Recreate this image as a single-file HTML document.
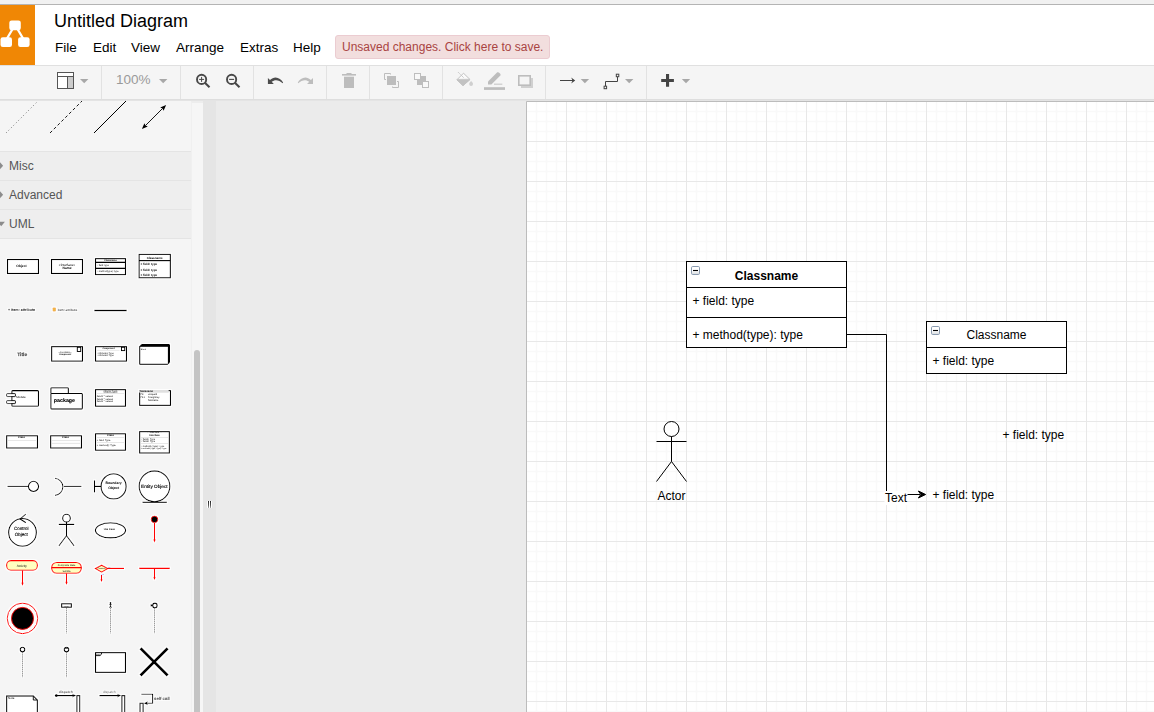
<!DOCTYPE html>
<html><head><meta charset="utf-8"><title>Untitled Diagram</title>
<style>
html,body{margin:0;padding:0;}
body{width:1154px;height:712px;overflow:hidden;position:relative;background:#ebebeb;font-family:"Liberation Sans",Arial,sans-serif;color:#000;}
.abs{position:absolute;}
#topband{left:0;top:0;width:1154px;height:4px;background:#f1f1f1;}
#topline{left:0;top:4px;width:1154px;height:1px;background:#b4b4b4;}
#header{left:0;top:5px;width:1154px;height:60px;background:#fff;}
#logo{left:0;top:5px;width:35px;height:60px;background:#f08705;}
#title{left:54px;top:11px;font-size:18px;line-height:21px;white-space:nowrap;}
.menu{top:39.5px;font-size:13.5px;line-height:16px;white-space:nowrap;}
#save{left:335px;top:35px;width:213px;height:22px;border:1px solid #ebccd1;background:#f2dede;border-radius:3px;color:#a94442;font-size:12px;line-height:22px;white-space:nowrap;}
#save span{position:absolute;left:6px;top:0;}
#hline{left:0;top:65px;width:1154px;height:1px;background:#e0e0e0;}
#toolbar{left:0;top:66px;width:1154px;height:33px;background:#f5f5f5;}
#tline{left:0;top:99px;width:1154px;height:1px;background:#dedede;}
#tline2{left:0;top:100px;width:1154px;height:1px;background:#e4e4e4;z-index:5;}
.sep{top:66px;width:1px;height:33px;background:#e2e2e2;}
#sidebar{left:0;top:100px;width:191px;height:612px;background:#f5f5f5;overflow:hidden;}
#sbtrack{left:191px;top:101px;width:12px;height:611px;background:#f6f6f6;border-left:1px solid #f0f0f0;box-sizing:border-box;border-top:2px solid #ededed;}
#sbthumb{left:194px;top:350px;width:6px;height:380px;background:#c4c4c4;border-radius:3px;}
#split{left:203px;top:100px;width:13px;height:612px;background:#e5e5e5;}
#handle{left:207px;top:501px;width:5px;height:7px;background:#fff;}
#handle i{position:absolute;top:0;width:1px;height:7px;background:linear-gradient(#222,#555 60%,#aaa);}
.sect{left:0;width:191px;height:28px;background:#eeeeee;border-top:1px solid #e4e4e4;font-size:12px;color:#555;}
.sect span{position:absolute;left:9px;top:7px;line-height:14px;}
#page{left:526px;top:101px;width:628px;height:611px;background:#fff;overflow:hidden;}
</style></head><body>
<div class="abs" id="topband"></div>
<div class="abs" id="topline"></div>
<div class="abs" id="header"></div>
<div class="abs" id="logo"></div>
<div class="abs" id="title">Untitled Diagram</div>
<div class="abs menu" style="left:55px">File</div>
<div class="abs menu" style="left:93px">Edit</div>
<div class="abs menu" style="left:131px">View</div>
<div class="abs menu" style="left:176px">Arrange</div>
<div class="abs menu" style="left:240px">Extras</div>
<div class="abs menu" style="left:293px">Help</div>
<div class="abs" id="save"><span>Unsaved changes. Click here to save.</span></div>
<div class="abs" id="hline"></div>
<div class="abs" id="toolbar"></div>
<div class="abs" id="tline"></div>
<div class="abs" id="tline2"></div>
<!--TOOLBAR-->
<div class="abs sep" style="left:101px"></div>
<div class="abs sep" style="left:180px"></div>
<div class="abs sep" style="left:253px"></div>
<div class="abs sep" style="left:326px"></div>
<div class="abs sep" style="left:369px"></div>
<div class="abs sep" style="left:442px"></div>
<div class="abs sep" style="left:545px"></div>
<div class="abs sep" style="left:646px"></div>
<div class="abs" style="left:116px;top:72px;font-size:13.5px;line-height:16px;color:#9a9a9a;">100%</div>
<svg class="abs" style="left:0;top:0" width="1154" height="100" viewBox="0 0 1154 100">
<!-- logo -->
<g fill="#fff" stroke="none">
<rect x="9.300" y="20.500" width="11.500" height="9.700" rx="2.300"/>
<rect x="0.500" y="37.300" width="11.500" height="9.700" rx="2.300"/>
<rect x="18.100" y="37.300" width="11.500" height="9.700" rx="2.300"/>
</g>
<path d="M12.600 29 L7 38.500 M17.500 29 L23.100 38.500" stroke="#fff" stroke-width="2.300" fill="none"/>
<!-- format icon -->
<g fill="none" stroke="#555" stroke-width="1">
<rect x="57.5" y="72.5" width="16" height="16" fill="#fff"/>
<path d="M57.5 76.5 H73.5 M67.5 76.5 V88.5"/>
<rect x="68" y="77" width="5" height="11" fill="#ccc" stroke="none"/>
</g>
<!-- dropdown triangles -->
<g fill="#a8a8a8">
<path d="M80 79 h8.4 l-4.2 4.2z"/>
<path d="M159 79 h8.4 l-4.2 4.2z"/>
<path d="M580.7 79 h8.4 l-4.2 4.2z"/>
<path d="M625 79 h8.4 l-4.2 4.2z"/>
<path d="M681.8 79 h8.4 l-4.2 4.2z"/>
</g>
<!-- zoom in -->
<g fill="none" stroke="#484848" stroke-width="1.900">
<circle cx="201.600" cy="79.400" r="4.600"/>
<path d="M204.900 82.800 L209.500 87.200" stroke-width="2.100"/>
<path d="M199.100 79.400 h5 M201.600 76.900 v5" stroke-width="1"/>
<circle cx="231.600" cy="79.400" r="4.600"/>
<path d="M234.900 82.800 L239.500 87.200" stroke-width="2.100"/>
<path d="M229.100 79.400 h5" stroke-width="1.100"/>
</g>
<!-- undo / redo -->
<path d="M267.9 78 L267.9 83.9 L273.8 83.9 L271.7 81.8 C274.6 79.3 279 79.6 282.6 83.2 L283.1 82.6 C280.6 77.6 274.4 75.2 270 80.1 Z" fill="#4c4c4c"/>
<path d="M313 78 L313 83.9 L307.1 83.9 L309.2 81.8 C306.3 79.3 301.9 79.6 298.3 83.2 L297.8 82.6 C300.3 77.6 306.5 75.2 310.9 80.1 Z" fill="#bdbdbd"/>
<!-- trash -->
<g fill="#bdbdbd">
<rect x="342" y="74" width="14" height="1.6"/>
<rect x="346.500" y="73" width="5" height="1.5"/>
<rect x="344" y="76.700" width="10" height="11.3"/>
</g>
<!-- to front -->
<g fill="#bdbdbd" stroke="none">
<rect x="387" y="76" width="9" height="9"/>
<rect x="417" y="76" width="9" height="9"/>
</g>
<g fill="none" stroke="#bdbdbd" stroke-width="1">
<path d="M390.500 74.500 V73.500 H384.500 V79.500 H386"/>
<path d="M392.500 86.500 V87.500 H398.500 V81.500 H397"/>
<rect x="414.500" y="73.500" width="6" height="6" fill="#f8f8f8"/>
<rect x="422.500" y="81.500" width="6" height="6" fill="#f8f8f8"/>
</g>
<!-- fill bucket -->
<path d="M463.500 73.200 L470 79.500 L463 85.700 L456.900 79.800 Z" fill="#fbfbfb" stroke="#c2c2c2" stroke-width="1" stroke-linejoin="round"/>
<path d="M457.400 79.300 L469.700 79.200 L470 79.500 L463 85.700 L456.900 79.800 Z" fill="#c2c2c2" stroke="#c2c2c2" stroke-width="0.600"/>
<path d="M458.100 72.200 L463.800 77.800" stroke="#bdbdbd" stroke-width="0.900" fill="none" stroke-dasharray="1.300 0.500"/>
<circle cx="471.100" cy="84" r="1.900" fill="#cfcfcf"/>
<path d="M471.100 80.800 l1.600 2.600 h-3.200z" fill="#cfcfcf"/>
<!-- pen -->
<g fill="#bdbdbd">
<path d="M488 84.600 L488 81.400 L497 72.600 C498.200 71.600 500.800 73.400 500.600 75.200 L491.400 84.600 Z"/>
<rect x="494" y="83.700" width="8.300" height="0.900"/>
<rect x="484" y="87.200" width="21" height="2.700"/>
</g>
<!-- shadow -->
<rect x="521" y="78" width="12" height="10" fill="#d0d0d0"/>
<rect x="518.800" y="75.800" width="11.400" height="9.400" fill="#f5f5f5" stroke="#bdbdbd" stroke-width="1.600"/>
<!-- arrow -->
<path d="M560 80.500 H573" stroke="#444" stroke-width="1" fill="none"/>
<path d="M575.200 80.500 L571.200 77.600 L572.500 80.500 L571.200 83.400 Z" fill="#444"/>
<!-- waypoints -->
<g fill="none" stroke="#444" stroke-width="1">
<path d="M617.500 77 V81.500 H605.500 V86"/>
<rect x="616.300" y="74.200" width="2.500" height="2.500" fill="#f5f5f5"/>
<rect x="604.100" y="86.200" width="2.500" height="2.500" fill="#f5f5f5"/>
</g>
<!-- plus -->
<path d="M661.200 78.900 h4.800 v-4.800 h3.100 v4.800 h4.800 v3.100 h-4.800 v4.800 h-3.100 v-4.800 h-4.800z" fill="#444"/>
</svg>
<!--/TOOLBAR-->
<div class="abs" id="sidebar">
<!--SIDEBAR-->
<div class="abs" style="left:0;top:-100px;width:191px;height:712px">
<div class="abs sect" style="top:151px"><span>Misc</span></div>
<div class="abs sect" style="top:180px"><span>Advanced</span></div>
<div class="abs sect" style="top:209px;height:28px;border-bottom:1px solid #e4e4e4"><span>UML</span></div>
<svg class="abs" style="left:0;top:0" width="191" height="712" viewBox="0 0 191 712" text-rendering="geometricPrecision" font-family="Liberation Sans, Arial, sans-serif">
<defs>
<filter id="halo" x="-5%" y="-5%" width="110%" height="110%"><feMorphology in="SourceAlpha" operator="dilate" radius="0.9" result="d"/><feFlood flood-color="#ffffff" flood-opacity="0.85"/><feComposite in2="d" operator="in" result="h"/><feMerge><feMergeNode in="h"/><feMergeNode in="SourceGraphic"/></feMerge></filter>
</defs>
<!-- section arrows -->
<path d="M0 162.300 L3.100 165.800 L0 169.300Z" fill="#8c8c8c"/>
<path d="M0 191.300 L3.100 194.800 L0 198.300Z" fill="#8c8c8c"/>
<path d="M0 221.800 L4.900 221.800 L1.200 226.200 L0 224.800Z" fill="#8c8c8c"/>
<!-- row 0 lines -->
<g stroke="#000" fill="none" stroke-width="1">
<path d="M6 133 L38.500 100.500" stroke="#555" stroke-width="0.800" stroke-dasharray="1 2.500"/>
<path d="M50 133 L82.500 100.500" stroke-dasharray="3 2.400" stroke-width="0.9"/>
<path d="M94 133 L126.500 100.500" stroke-width="1"/>
<path d="M145.500 125.500 L162.500 108.500" stroke-width="0.900"/>
</g>
<path d="M141.900 129.100 L147.800 126.600 L145.500 125.500 L144.400 123.200Z" fill="#000"/>
<path d="M166.100 104.900 L160.200 107.400 L162.500 108.500 L163.600 110.800Z" fill="#000"/>
<g filter="url(#halo)">
<!-- ROW 1 -->
<g stroke="#000" stroke-width="1.100" fill="#fff">
<rect x="7.500" y="259.500" width="31" height="14"/>
<rect x="51.500" y="259.500" width="31" height="14"/>
<rect x="95.500" y="258.600" width="30" height="16"/>
<path d="M95.500 262.400 H125.500 M95.500 268.400 H125.500" fill="none"/>
<rect x="139" y="254.400" width="31.400" height="23.400"/>
<path d="M139 260.600 H170.400" fill="none"/>
</g>
<g fill="#000" stroke="none">
<text transform="translate(21.5 267) scale(0.2750)" font-size="12" text-anchor="middle" font-weight="bold">Object</text>
<text transform="translate(67 265.6) scale(0.2750)" font-size="12" text-anchor="middle">«interface»</text>
<text transform="translate(67 269.3) scale(0.2750)" font-size="12" text-anchor="middle" font-weight="bold">Name</text>
<text transform="translate(110.5 261.4) scale(0.2000)" font-size="12" text-anchor="middle" font-weight="bold">Classname</text>
<text transform="translate(96.6 266.3) scale(0.2000)" font-size="12">+ field: type</text>
<text transform="translate(96.6 272.3) scale(0.2000)" font-size="12">+ method(type): type</text>
<text transform="translate(154.7 258.7) scale(0.2500)" font-size="12" text-anchor="middle" font-weight="bold">Classname</text>
<text transform="translate(140.5 265) scale(0.2500)" font-size="12" font-weight="bold">+ field: type</text>
<text transform="translate(140.5 270.7) scale(0.2500)" font-size="12" font-weight="bold">+ field: type</text>
<text transform="translate(140.5 275.6) scale(0.2500)" font-size="12" font-weight="bold">+ field: type</text>
</g>
<!-- ROW 2 -->
<g fill="#000" stroke="none">
<text transform="translate(8 311.4) scale(0.3000)" font-size="12" stroke="#000" stroke-width="0.5" font-weight="bold">+ item: attribute</text>
<text transform="translate(57.8 311.4) scale(0.2667)" font-size="12" stroke="#000" stroke-width="0.4">item: attribute</text>
</g>
<rect x="52.600" y="307.500" width="3.300" height="4" rx="0.8" fill="#f2b447"/>
<path d="M94.200 310.500 H126.800" stroke="#000" stroke-width="1.300" fill="none"/>
<!-- ROW 3 -->
<text transform="translate(22.2 355.8) scale(0.4083)" font-size="12" stroke="#000" stroke-width="0.7" text-anchor="middle" font-weight="bold" fill="#000">Title</text>
<g stroke="#000" stroke-width="1.100" fill="#fff">
<rect x="51.600" y="346.600" width="30.900" height="14.600"/>
<rect x="77.300" y="347.300" width="3.400" height="4.200" stroke-width="0.9"/>
<rect x="95.500" y="346.600" width="31" height="14.600"/>
<rect x="121.500" y="347.300" width="3.200" height="3.300" stroke-width="0.9"/>
<path d="M97 350.400 H119.500" stroke="#d8d8d8" stroke-width="0.600" fill="none"/>
</g>
<g fill="#000" stroke="none">
<text transform="translate(65 353) scale(0.1833)" font-size="12" text-anchor="middle">«Annotation»</text>
<text transform="translate(65 355.3) scale(0.1833)" font-size="12" text-anchor="middle" font-weight="bold">Component</text>
<text transform="translate(108.5 349.2) scale(0.1833)" font-size="12" text-anchor="middle" font-weight="bold">Component</text>
<text transform="translate(96.5 354) scale(0.1833)" font-size="12">+ Attribute1: Type</text>
<text transform="translate(96.5 356.2) scale(0.1833)" font-size="12">+ Attribute2: Type</text>
</g>
<!-- cube -->
<path d="M139.600 346.200 L141.300 344.500 L169.500 344.500 L169.500 362.700 L167.800 364.400 L139.600 364.400Z" fill="#000" stroke="#000" stroke-width="1"/>
<rect x="140.200" y="346.800" width="27.700" height="17" fill="#fff" stroke="none"/>
<text transform="translate(140.8 349.5) scale(0.1750)" font-size="12" fill="#000">Block</text>
<!-- ROW 4 -->
<g stroke="#000" stroke-width="1.100" fill="#fff">
<rect x="11.800" y="390.600" width="26.700" height="15.700" rx="0.8"/>
<rect x="6.600" y="393.600" width="8.800" height="3" rx="0.6" stroke-width="0.9"/>
<rect x="6.600" y="400.600" width="8.800" height="3" rx="0.6" stroke-width="0.9"/>
<path d="M50.800 393.500 V388.500 Q50.800 387.800 51.500 387.800 H67.700 Q68.400 387.800 68.400 388.500 V393.500" />
<rect x="50.800" y="393.500" width="31.600" height="15.600" rx="0.8"/>
<rect x="95.500" y="389.600" width="30" height="16.700"/>
<rect x="139.600" y="390.600" width="30.900" height="14.800"/>
</g>
<rect x="139.100" y="390" width="29.600" height="2.700" fill="#e0e0e0"/>
<path d="M97 393.500 H124" stroke="#d8d8d8" stroke-width="0.600" fill="none"/>
<g fill="#000" stroke="none">
<text transform="translate(16.2 397.8) scale(0.2417)" font-size="12">Module</text>
<text transform="translate(53.8 401.9) scale(0.4417)" font-size="12" stroke="#000" stroke-width="0.2" font-weight="bold">package</text>
<text transform="translate(110.5 392.4) scale(0.2167)" font-size="12" text-anchor="middle" text-decoration="underline">Object:Type</text>
<text transform="translate(96.8 397.3) scale(0.2083)" font-size="12">field1 = value1</text>
<text transform="translate(96.8 400.3) scale(0.2083)" font-size="12">field2 = value2</text>
<text transform="translate(96.8 402.4) scale(0.2083)" font-size="12">field3 = value3</text>
<text transform="translate(139.6 392.3) scale(0.2167)" font-size="12" font-weight="bold">Tablename</text>
<text transform="translate(140.4 395.4) scale(0.2000)" font-size="12">PK</text>
<text transform="translate(148 395.4) scale(0.2000)" font-size="12">uniqueId</text>
<text transform="translate(140.4 398.4) scale(0.2000)" font-size="12">FK1</text>
<text transform="translate(148 398.4) scale(0.2000)" font-size="12">foreignKey</text>
<text transform="translate(148 401.4) scale(0.2000)" font-size="12">fieldname</text>
</g>
<!-- ROW 5 -->
<g stroke="#000" stroke-width="1.100" fill="#fff">
<rect x="6.600" y="435.700" width="30.900" height="12.400"/>
<rect x="50.600" y="435.700" width="30.900" height="12.400"/>
<rect x="95.500" y="433.700" width="30" height="16.600"/>
<rect x="139.600" y="431.600" width="29.800" height="21.500"/>
</g>
<g stroke="#dcdcdc" stroke-width="0.700" fill="none">
<path d="M8 440.500 H36 M52 440.500 H80 M52 443.400 H80 M97 437.500 H124 M97 442.500 H124 M141 437.500 H168 M141 443.500 H168"/>
</g>
<g fill="#000" stroke="none">
<text transform="translate(21.5 438.3) scale(0.2167)" font-size="12" text-anchor="middle" font-weight="bold">Class</text>
<text transform="translate(65.5 438.3) scale(0.2167)" font-size="12" text-anchor="middle" font-weight="bold">Class</text>
<text transform="translate(110.5 436.4) scale(0.2167)" font-size="12" text-anchor="middle" font-weight="bold">Class</text>
<text transform="translate(96.8 441.3) scale(0.2083)" font-size="12">+ field: Type</text>
<text transform="translate(96.8 446.3) scale(0.2083)" font-size="12">+ method(): Type</text>
<text transform="translate(154.5 433.3) scale(0.1917)" font-size="12" text-anchor="middle" font-style="italic">&lt;&lt;Interface&gt;&gt;</text>
<text transform="translate(154.5 436.3) scale(0.2083)" font-size="12" text-anchor="middle" font-weight="bold">Interface</text>
<text transform="translate(140.8 440.3) scale(0.2000)" font-size="12">+ field1: Type</text>
<text transform="translate(140.8 442.3) scale(0.2000)" font-size="12">+ field2: Type</text>
<text transform="translate(140.8 447.3) scale(0.1900)" font-size="12">+ method1(Type): Type</text>
<text transform="translate(140.8 449.3) scale(0.1650)" font-size="12">+ method2(Type, Type): Type</text>
</g>
<!-- ROW 6 -->
<g stroke="#000" stroke-width="1.100" fill="none">
<path d="M7.400 486.400 H28.400"/>
<circle cx="33.500" cy="486.400" r="5.100" fill="#fff"/>
<path d="M55 478.300 A8.800 8.600 0 0 1 55 495.400"/>
<path d="M63.800 486.400 H81.500"/>
<path d="M94.500 480.200 V492.600 M94.500 486.400 H101"/>
<circle cx="113.600" cy="486.400" r="12.600" fill="#fff"/>
<circle cx="154.500" cy="486.300" r="15.400" fill="#fff"/>
<path d="M142.400 502.300 H166.900" stroke-width="1.300"/>
</g>
<g fill="#000" stroke="none" text-anchor="middle">
<text transform="translate(113.6 484.4) scale(0.2917)" font-size="12" font-weight="bold">Boundary</text>
<text transform="translate(113.6 489.3) scale(0.2917)" font-size="12" font-weight="bold">Object</text>
<text transform="translate(154.3 487.6) scale(0.3900)" font-size="12" stroke="#000" stroke-width="0.35">Entity Object</text>
</g>
<!-- ROW 7 -->
<g stroke="#000" stroke-width="1.100" fill="none">
<circle cx="22.500" cy="532.400" r="13.900" fill="#fff"/>
<path d="M25.800 514.200 L20.100 519 L25.800 522.600"/>
<circle cx="66.500" cy="518.200" r="3.900" fill="#fff"/>
<path d="M66.500 522.100 V535.700 M58.700 524.400 H74.300 M58.900 545.900 L66.500 535.700 L74.100 545.900"/>
<ellipse cx="110.500" cy="530.300" rx="15.100" ry="7.600" fill="#fff"/>
</g>
<g fill="#000" stroke="none" text-anchor="middle">
<text transform="translate(21.2 529.8) scale(0.3750)" font-size="12" stroke="#000" stroke-width="0.3">Control</text>
<text transform="translate(21.2 536) scale(0.3750)" font-size="12" stroke="#000" stroke-width="0.3">Object</text>
<text transform="translate(109.3 530.3) scale(0.2083)" font-size="12" font-weight="bold">Use Case</text>
</g>
<circle cx="154.500" cy="519.400" r="3.300" fill="#000" stroke="#f00" stroke-width="1"/>
<path d="M154.500 523 V541" stroke="#f00" stroke-width="1.100" fill="none"/>
<path d="M154.500 542.800 L153 539 L154.500 540 L156 539Z" fill="#f00"/>
<!-- ROW 8 -->
<g stroke="#f00" stroke-width="1.100" fill="#ffffc0">
<rect x="6.600" y="560.600" width="30.800" height="9.600" rx="4.200"/>
<path d="M22.500 570.200 V584" fill="none"/>
<rect x="51.600" y="562.500" width="29.800" height="10.800" rx="5"/>
<path d="M51.600 567.600 H81.400 M66.500 573.300 V583" fill="none"/>
<path d="M95.300 568.600 L101.600 565.200 L107.900 568.600 L101.600 572.200Z"/>
<path d="M107.900 568.400 H124 M101.500 575 V580.500" fill="none"/>
<path d="M139.100 568.300 H169.900" stroke-width="1.500" fill="none"/>
<path d="M154.500 569 V578.500" fill="none"/>
</g>
<g fill="#f00" stroke="none">
<path d="M22.500 585.900 L21 582.300 L22.500 583.200 L24 582.300Z"/>
<path d="M66.500 585 L65 581.400 L66.500 582.300 L68 581.400Z"/>
<path d="M101.500 582.200 L100.200 578.900 L101.500 579.700 L102.800 578.900Z"/>
<path d="M154.500 580.200 L153.100 576.800 L154.500 577.600 L155.900 576.800Z"/>
</g>
<g fill="#000" stroke="none" text-anchor="middle">
<text transform="translate(21.8 566.6) scale(0.2667)" font-size="12">Activity</text>
<text transform="translate(66.5 565.7) scale(0.2000)" font-size="12">Composite State</text>
<text transform="translate(66.5 571.5) scale(0.2000)" font-size="12">Subtitle</text>
<text transform="translate(101.6 569.3) scale(0.1500)" font-size="12">Condition</text>
<text transform="translate(109.3 567.8) scale(0.1500)" font-size="12" fill="#00f">no</text>
<text transform="translate(102.6 575) scale(0.1500)" font-size="12" fill="#00f">yes</text>
</g>
<!-- ROW 9 -->
<circle cx="22.500" cy="618.400" r="15.300" fill="#fbfbfb" stroke="#f00" stroke-width="1"/>
<circle cx="22.500" cy="618.400" r="11" fill="#000" stroke="#f00" stroke-width="0.9"/>
<g stroke="#555" stroke-width="0.700" stroke-dasharray="1.600 0.500" fill="none">
<path d="M66.500 607.700 V633.400 M110.500 607.700 V633.400 M154.500 608 V633.400 M22.500 652 V677.400 M66.500 652 V677.400"/>
</g>
<g stroke="#000" stroke-width="1.100" fill="#fff">
<rect x="61.600" y="603.700" width="9.800" height="3.600"/>
<circle cx="154.900" cy="605.400" r="2.300"/>
<circle cx="22.500" cy="649.600" r="2.300"/>
<circle cx="66.500" cy="649.600" r="2.300"/>
<rect x="95.500" y="652.600" width="30" height="19.800"/>
<path d="M95.500 655.600 H100 L101.500 654.200 V652.600" fill="none" stroke-width="0.900"/>
</g>
<path d="M151.200 604.200 v2.400 M151.200 605.400 h1.500" stroke="#000" stroke-width="1.300" fill="none"/>
<path d="M64.500 648.400 h4" stroke="#555" stroke-width="1" fill="none"/>
<path d="M110.500 602.300 V607.500 M109.200 604.600 H111.800 M109.300 607.800 L110.500 606 L111.700 607.800" stroke="#000" stroke-width="0.900" fill="none"/>
<circle cx="110.500" cy="603" r="0.900" fill="#000"/>
<text transform="translate(66.5 606.5) scale(0.1250)" font-size="12" text-anchor="middle" fill="#000">:Object</text>
<text transform="translate(98.3 654.8) scale(0.1500)" font-size="12" text-anchor="middle" fill="#000">frame</text>
<path d="M140.500 648.300 L167.700 675.500 M167.700 648.300 L140.500 675.500" stroke="#000" stroke-width="3" fill="none"/>
<!-- ROW 11 -->
<g stroke="#000" stroke-width="1.100" fill="#fff">
<path d="M6.600 714 V695.900 H33.300 L37.400 700 V714Z"/>
<path d="M33.300 695.900 V700 H37.400" fill="none" stroke-width="0.900"/>
<rect x="76.800" y="695.600" width="3" height="20"/>
<rect x="121.800" y="695.600" width="3" height="20"/>
<rect x="139.900" y="703.200" width="3.300" height="12"/>
<path d="M56.300 695.600 H73 M99.300 695.600 H119 M141.300 694.200 H152.600 V703.200 H146" fill="none"/>
</g>
<circle cx="56.300" cy="695.600" r="1.500" fill="#000"/>
<path d="M76.300 695.600 L72 693.800 L73 695.600 L72 697.400Z" fill="#000"/>
<path d="M121.300 695.600 L117 693.800 L118 695.600 L117 697.400Z" fill="#000"/>
<path d="M143.600 703.200 L148 701.200 L147 703.200 L148 705.200Z" fill="#000"/>
<g fill="#000" stroke="none">
<text transform="translate(8 698.5) scale(0.2500)" font-size="12">Note</text>
<text transform="translate(65.8 693.3) scale(0.2833)" font-size="12" text-anchor="middle" font-weight="bold">dispatch</text>
<text transform="translate(109.3 693.3) scale(0.2833)" font-size="12" text-anchor="middle" fill="#333">dispatch</text>
<text transform="translate(154 700.3) scale(0.3583)" font-size="12" stroke="#000" stroke-width="0.4" font-weight="bold">self call</text>
</g>
</g>
</svg>
</div>
<!--/SIDEBAR-->
</div>
<div class="abs" id="sbtrack"></div>
<div class="abs" id="sbthumb"></div>
<div class="abs" id="split"></div>
<div class="abs" id="handle"><i style="left:1px"></i><i style="left:3px"></i></div>
<div class="abs" id="page">
<!--PAGE-->
<svg class="abs" style="left:0;top:0" width="628" height="611" viewBox="526 101 628 611" font-family="Liberation Sans, Arial, sans-serif" font-size="12">
<defs>
<pattern id="grid" x="526" y="101" width="40" height="40" patternUnits="userSpaceOnUse">
<path d="M10.500 0 V40 M20.500 0 V40 M30.500 0 V40 M0 10.500 H40 M0 20.500 H40 M0 30.500 H40" stroke="#f9f9f9" stroke-width="1.500" fill="none"/>
<path d="M0.500 0 V40 M0 0.500 H40" stroke="#e8e8e8" stroke-width="1" fill="none"/>
</pattern>
<linearGradient id="cg" x1="0" y1="0" x2="0" y2="1"><stop offset="0" stop-color="#ffffff"/><stop offset="0.5" stop-color="#ffffff"/><stop offset="1" stop-color="#d4d8dc"/></linearGradient>
</defs>
<rect x="526" y="101" width="628" height="611" fill="#fff"/>
<rect x="526" y="101" width="628" height="611" fill="url(#grid)"/>
<path d="M526.500 712 V101.500 H1154" stroke="#bcbcbc" stroke-width="1" fill="none"/>
<!-- edge -->
<path d="M846.500 334.500 H886.500 V494.500 H920" stroke="#000" stroke-width="1" fill="none"/>
<path d="M925.600 494.500 L918.400 498 L920.800 494.500 L918.400 491Z" fill="#000" stroke="#000" stroke-width="1" stroke-linejoin="miter"/>
<rect x="884.500" y="491" width="23" height="14" fill="#fff"/>
<text x="885" y="501.700" font-size="12">Text</text>
<!-- class 1 -->
<g stroke="#000" stroke-width="1" fill="#fff">
<rect x="686.500" y="261.500" width="160" height="86"/>
<path d="M686.500 287.500 H846.500 M686.500 317.500 H846.500" fill="none"/>
</g>
<text x="766.500" y="279.800" text-anchor="middle" font-weight="bold">Classname</text>
<text x="692.500" y="305">+ field: type</text>
<text x="692.500" y="338.700">+ method(type): type</text>
<rect x="691.500" y="266.500" width="8" height="8" rx="1.200" fill="url(#cg)" stroke="#8a9bb0" stroke-width="1"/>
<path d="M693 270.500 H698" stroke="#000" stroke-width="1.100" fill="none"/>
<!-- class 2 -->
<g stroke="#000" stroke-width="1" fill="#fff">
<rect x="926.500" y="321.500" width="140" height="52"/>
<path d="M926.500 347.500 H1066.500" fill="none"/>
</g>
<text x="996.500" y="338.800" text-anchor="middle">Classname</text>
<text x="932.500" y="364.700">+ field: type</text>
<rect x="931.500" y="326.500" width="8" height="8" rx="1.200" fill="url(#cg)" stroke="#8a9bb0" stroke-width="1"/>
<path d="M933 330.500 H938" stroke="#000" stroke-width="1.100" fill="none"/>
<!-- loose fields -->
<text x="1002.500" y="438.700">+ field: type</text>
<text x="932.500" y="498.700">+ field: type</text>
<!-- actor -->
<g stroke="#000" stroke-width="1" fill="none">
<ellipse cx="671.500" cy="429" rx="7.500" ry="7.500" fill="#fff"/>
<path d="M671.500 436.500 V461.500 M656.500 441.500 H686.500 M656.500 481.500 L671.500 461.500 L686.500 481.500"/>
</g>
<text x="671.500" y="499.500" text-anchor="middle">Actor</text>
</svg>
<!--/PAGE-->
</div>
</body></html>
